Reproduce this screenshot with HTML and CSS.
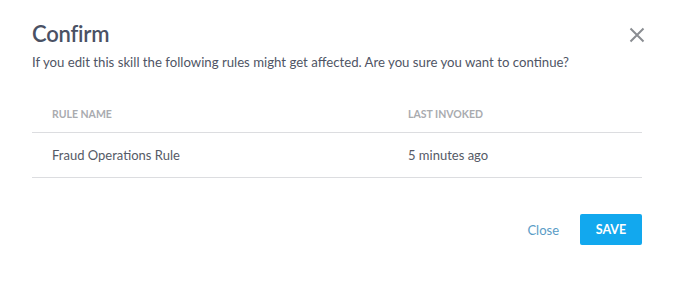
FILE: index.html
```html
<!DOCTYPE html>
<html>
<head>
<meta charset="utf-8">
<link rel="stylesheet" href="styles.css">
</head>
<body>
<div class="dialog">
  <div class="header">
    <h1 class="title">Confirm</h1>
    <button class="close-x" aria-label="Close">
      <svg width="16" height="16" viewBox="0 0 16 16"><path d="M1.5 1.5 L14.5 14.5 M14.5 1.5 L1.5 14.5" stroke="#8a8d92" stroke-width="2" fill="none"/></svg>
    </button>
  </div>
  <p class="subtitle">If you edit this skill the following rules might get affected. Are you sure you want to continue?</p>
  <div class="table">
    <div class="row head">
      <div class="cell">RULE NAME</div>
      <div class="cell">LAST INVOKED</div>
    </div>
    <div class="row body">
      <div class="cell">Fraud Operations Rule</div>
      <div class="cell">5 minutes ago</div>
    </div>
  </div>
  <div class="footer">
    <button class="btn-link">Close</button>
    <button class="btn-primary">SAVE</button>
  </div>
</div>
</body>
</html>
```
FILE: styles.css
```css
html, body {
  margin: 0;
  background: #ffffff;
}
body {
  font-family: "Lato", "Open Sans", sans-serif;
  color: #4d5363;
}
.dialog {
  width: 610px;
  padding: 20px 34px 0 32px;
}
.header {
  display: flex;
  justify-content: space-between;
  align-items: center;
  height: 28px;
}
.title {
  margin: 0;
  font-size: 22px;
  line-height: 28px;
  font-weight: 600;
  color: #4a5164;
  letter-spacing: -0.2px;
}
.close-x {
  border: 0;
  background: none;
  padding: 0;
  margin-right: -3px;
  margin-top: 2px;
  display: flex;
}
.subtitle {
  margin: 5px 0 0 0;
  font-size: 13.2px;
  line-height: 18px;
  color: #4f5565;
}
.table {
  margin-top: 25px;
}
.row {
  display: grid;
  grid-template-columns: 356px 1fr;
  border-bottom: 1px solid #dcdde0;
}
.cell {
  padding-left: 20px;
}
.head {
  height: 36px;
  align-items: center;
  font-size: 10.5px;
  font-weight: 700;
  color: #a9abaf;
}
.body {
  height: 44px;
  align-items: center;
  font-size: 13px;
  color: #555a66;
}
.footer {
  display: flex;
  justify-content: flex-end;
  align-items: center;
  gap: 21px;
  margin-top: 36px;
}
.btn-link {
  border: 0;
  background: none;
  padding: 0;
  font-family: inherit;
  font-size: 13px;
  color: #5a9cc6;
}
.btn-primary {
  border: 0;
  border-radius: 2px;
  background: #12a8ee;
  color: #ffffff;
  font-family: inherit;
  font-size: 12.5px;
  font-weight: 700;
  width: 62px;
  height: 31px;
  padding: 0;
}
```
